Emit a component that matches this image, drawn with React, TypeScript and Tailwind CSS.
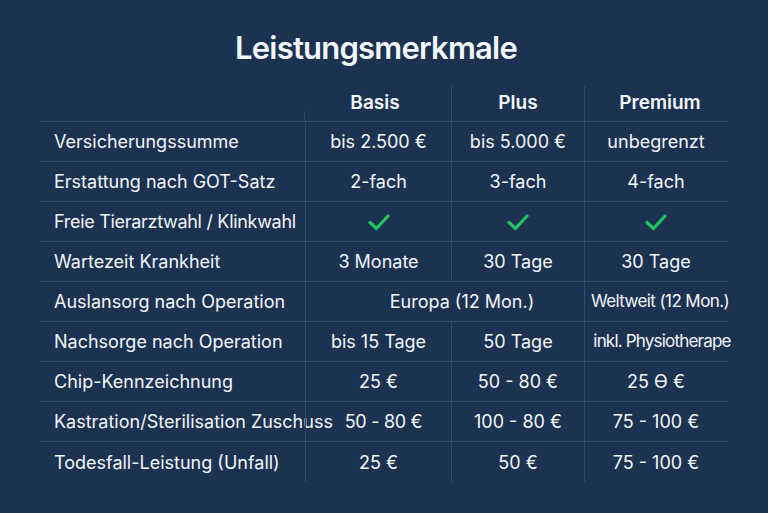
import React from 'react';

type Cell = { text?: string; check?: boolean; span?: number; extra?: string };

const rows: { label: string; labelExtra?: string; cells: Cell[] }[] = [
  { label: 'Versicherungssumme', cells: [{ text: 'bis 2.500 €' }, { text: 'bis 5.000 €' }, { text: 'unbegrenzt' }] },
  { label: 'Erstattung nach GOT-Satz', cells: [{ text: '2-fach' }, { text: '3-fach' }, { text: '4-fach' }] },
  { label: 'Freie Tierarztwahl / Klinkwahl', labelExtra: 'tracking-[-0.3px]', cells: [{ check: true }, { check: true }, { check: true }] },
  { label: 'Wartezeit Krankheit', cells: [{ text: '3 Monate' }, { text: '30 Tage' }, { text: '30 Tage' }] },
  { label: 'Auslansorg nach Operation', cells: [{ text: 'Europa (12 Mon.)', span: 2, extra: 'pl-[34px]' }, { text: 'Weltweit (12 Mon.)', extra: 'text-[17px] tracking-[-0.6px] pl-[8px]' }] },
  { label: 'Nachsorge nach Operation', cells: [{ text: 'bis 15 Tage' }, { text: '50 Tage' }, { text: 'inkl. Physiotherape', extra: 'text-[17px] tracking-[-0.8px] pl-[12px]' }] },
  { label: 'Chip-Kennzeichnung', cells: [{ text: '25 €' }, { text: '50 - 80 €' }, { text: '25 Ɵ €' }] },
  { label: 'Kastration/Sterilisation Zuschuss', cells: [{ text: '50 - 80 €', extra: 'pl-[10px] tracking-[-0.3px]' }, { text: '100 - 80 €' }, { text: '75 - 100 €' }] },
  { label: 'Todesfall-Leistung (Unfall)', cells: [{ text: '25 €' }, { text: '50 €' }, { text: '75 - 100 €' }] },
];

const CheckMark = () => (
  <svg width="24" height="20" viewBox="0 0 24 20" fill="none">
    <path d="M3 10.5 L9.5 16.5 L21 4" stroke="#22c55e" strokeWidth="3.2" strokeLinecap="round" strokeLinejoin="round" />
  </svg>
);

export default function App() {
  return (
    <div className="w-[768px] h-[513px] bg-[#1b3251] text-[#f3f6fa] font-['Inter',sans-serif] overflow-hidden">
      <h1 className="pt-[29px] pr-[16px] text-center text-[31px] leading-[38px] font-semibold tracking-tight">
        Leistungsmerkmale
      </h1>

      <div className="ml-[40px] mt-[19px] grid grid-cols-[265px_146px_133px_143px] text-[18px]">
        {/* header */}
        <div className="h-[36px] border-b border-[#2f4b6e] flex items-end justify-end">
          <div className="h-[10px] border-r border-[#2f4b6e]" />
        </div>
        <div className="h-[36px] border-b border-[#2f4b6e] flex items-center justify-center text-[19px] font-semibold pr-[6px]">Basis</div>
        <div className="h-[36px] border-b border-l border-[#2f4b6e] flex items-center justify-center text-[19px] font-semibold">Plus</div>
        <div className="h-[36px] border-b border-l border-[#2f4b6e] flex items-center justify-center text-[19px] font-semibold pl-[8px]">Premium</div>

        {rows.map((row, i) => {
          const last = i === rows.length - 1;
          const bottom = last ? '' : 'border-b';
          return (
            <React.Fragment key={row.label}>
              <div className={`h-[40px] ${bottom} border-[#2f4b6e] flex items-center pl-[14px] whitespace-nowrap ${row.labelExtra ?? ''}`}>
                {row.label}
              </div>
              {row.cells.map((c, j) => (
                <div
                  key={j}
                  className={`h-[40px] ${bottom} border-l border-[#2f4b6e] flex items-center justify-center whitespace-nowrap ${c.span === 2 ? 'col-span-2' : ''} ${c.extra ?? ''}`}
                >
                  {c.check ? <CheckMark /> : c.text}
                </div>
              ))}
            </React.Fragment>
          );
        })}
      </div>
    </div>
  );
}
